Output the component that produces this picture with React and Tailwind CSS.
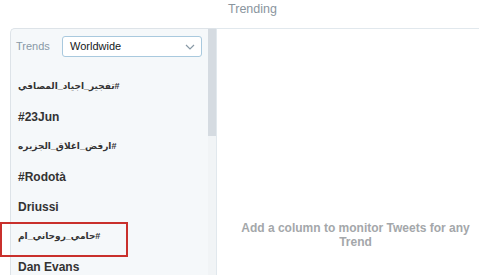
import React from "react";

// trends shown in the left column
const TRENDS = [
  { text: "#تفجير_اجياد_المصافي", rtl: true },
  { text: "#23Jun" },
  { text: "#ارفض_اغلاق_الجزيره", rtl: true },
  { text: "#Rodotà" },
  { text: "Driussi" },
  { text: "#حامي_روحاني_ام", rtl: true },
  { text: "Dan Evans" },
];

function Chevron() {
  return (
    <svg width="10" height="6" viewBox="0 0 10 6" className="text-[#8899a6]">
      <polyline points="1,1 5,5 9,1" fill="none" stroke="currentColor" strokeWidth="1.2" />
    </svg>
  );
}

export default function App() {
  return (
    <div
      className="relative w-[479px] h-[275px] overflow-hidden bg-white"
      style={{ fontFamily: '"Liberation Sans", Arial, "DejaVu Sans", sans-serif' }}
    >
      {/* header */}
      <div className="h-[28px] flex justify-center pt-[1px] pl-[26px] text-[12.5px] leading-[16px] text-[#8a959e]">
        Trending
      </div>

      <div className="flex h-[247px]">
        {/* trends column */}
        <div className="ml-[10px] w-[198px] bg-[#f5f8fa] border-l border-t border-[#dde3e8] rounded-tl-[5px]">
          <div className="flex items-center pt-[7px] pl-[5px] pr-[6px]">
            <span className="text-[11px] text-[#8899a6] w-[46px]">Trends</span>
            <div className="flex-1 h-[21px] flex items-center justify-between bg-white border border-[#a9c9de] rounded-[3px] pl-[7px] pr-[6px]">
              <span className="text-[11px] text-[#14171a]">Worldwide</span>
              <Chevron />
            </div>
          </div>
          <div className="pt-[15px]">
            {TRENDS.map((t, i) => (
              <div key={i} className="h-[30px] flex items-center pl-[7px] text-[12px] font-bold text-[#333]">
                <span dir={t.rtl ? "rtl" : "ltr"} className={t.rtl ? "text-[9px]" : ""}>
                  {t.text}
                </span>
              </div>
            ))}
          </div>
        </div>

        {/* scrollbar */}
        <div className="w-[8px] flex flex-col border-t border-[#dde3e8]">
          <div className="h-[107px] bg-[#d5dbe1]" />
          <div className="flex-1 bg-[#f1f4f6]" />
        </div>

        {/* empty area */}
        <div className="flex-1 border-l border-t border-[#e1e8ed] flex flex-col items-center pt-[192px] pl-[15px]">
          <p className="text-center text-[12px] leading-[14px] font-bold text-[#a4a7aa]">
            Add a column to monitor Tweets for any Trend
          </p>
        </div>
      </div>

      {/* annotation box */}
      <div className="absolute left-0 top-[222px] w-[128px] h-[35px] border-2 border-[#c9302c]" />
    </div>
  );
}
